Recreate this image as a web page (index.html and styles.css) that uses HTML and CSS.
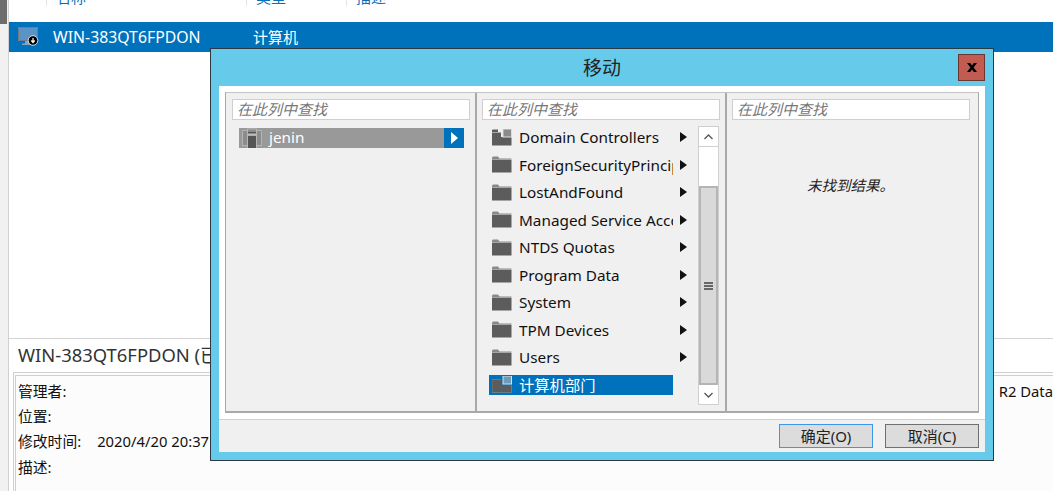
FILE: index.html
```html
<!DOCTYPE html>
<html lang="zh-CN">
<head>
    <meta charset="UTF-8">
    <title>移动</title>
    <link rel="stylesheet" href="styles.css">
</head>
<body>
    <svg class="defs" width="0" height="0">
        <symbol id="folder" viewBox="0 0 20 17">
            <path d="M0 3V1.500L1 .5H6L7.500 2.500H19.500V3Z" fill="#8a8a8a"/>
            <path d="M0 3.500H19.500V16.500H0Z" fill="#5c5c5c"/>
        </symbol>
        <symbol id="arrow" viewBox="0 0 7 10">
            <path d="M0 0L7 5L0 10Z" fill="#111"/>
        </symbol>
    </svg>

    <div class="gutter"><div class="gutter-thumb"></div></div>

    <div class="main">
        <div class="list-head">
            <div class="head-cell head-name"><span>名称</span></div>
            <div class="head-cell head-type"><span>类型</span></div>
            <div class="head-cell head-desc"><span>描述</span></div>
        </div>
        <div class="list-row">
            <svg class="pc-icon" width="21" height="20" viewBox="0 0 21 20">
                <rect x=".5" y=".5" width="19" height="13" fill="#5b93c4" stroke="#6d7d8c"/>
                <path d="M7 14H13V16.500H16V18H4V16.500H7Z" fill="#7fa6c6"/>
                <circle cx="15" cy="13.500" r="4.800" fill="#000" stroke="#fff" stroke-width=".8"/>
                <path d="M15 11V14.500M13.300 13.500L15 15.500L16.700 13.500" fill="none" stroke="#fff" stroke-width="1.200"/>
            </svg>
            <span class="row-name">WIN-383QT6FPDON</span>
            <span class="row-type">计算机</span>
        </div>
        <div class="list-empty"></div>
        <div class="detail-title">WIN-383QT6FPDON (已</div>
        <div class="detail-box">
            <div class="detail-line">
                <span>管理者:</span>
                <span class="detail-right">R2 Data</span>
            </div>
            <div class="detail-line">位置:</div>
            <div class="detail-line">修改时间:<span class="detail-date">2020/4/20 20:37</span></div>
            <div class="detail-line">描述:</div>
        </div>
    </div>

    <div class="dialog">
        <div class="dialog-title">
            <span>移动</span>
            <div class="close-btn">
                <svg width="10" height="9" viewBox="0 0 10 9"><path d="M0 0H3.200L5 2.500L6.800 0H10L6.600 4.500L10 9H6.800L5 6.500L3.200 9H0L3.400 4.500Z" fill="#000"/></svg>
            </div>
        </div>
        <div class="dialog-body">
            <div class="columns">
                <div class="column">
                    <div class="search">在此列中查找</div>
                    <div class="selected-item">
                        <svg class="item-icon" width="20" height="20" viewBox="0 0 20 20">
                            <path d="M.5 2.500H19.500V17.500H.5Z" fill="#8c8c8c" stroke="#b5b5b5"/>
                            <path d="M5 .5H15V20H5Z" fill="#b5b5b5"/>
                            <path d="M6 1.500H14V20H6Z" fill="#8c8c8c"/>
                            <path d="M6 4H14V5H6ZM6 7.500H14V20H6Z" fill="#555"/>
                            <path d="M6 6.500H14V7.500H6Z" fill="#eee"/>
                        </svg>
                        <span class="selected-name">jenin</span>
                        <span class="selected-arrow">
                            <svg width="7" height="12" viewBox="0 0 7 12"><path d="M0 0L7 6L0 12Z" fill="#fff"/></svg>
                        </span>
                    </div>
                </div>
                <div class="column">
                    <div class="search">在此列中查找</div>
                    <div class="tree">
                        <div class="tree-items">
                            <div class="tree-row">
                                <svg class="folder" width="20" height="17" viewBox="0 0 20 17">
                                    <path d="M0 3.500H19.500V16.500H0Z" fill="#5c5c5c"/>
                                    <path d="M0 3V1L1 .5H6V3Z" fill="#5c5c5c"/>
                                    <rect x="9" y="0" width="10.500" height="8" fill="#f0f0f0"/>
                                    <rect x="11" y="0" width="8.500" height="8" fill="#8a8a8a" stroke="#ddd"/>
                                </svg>
                                <span class="tree-label">Domain Controllers</span>
                                <svg class="tree-arrow" width="7" height="10"><use href="#arrow"/></svg>
                            </div>
                            <div class="tree-row">
                                <svg class="folder" width="20" height="17"><use href="#folder"/></svg>
                                <span class="tree-label">ForeignSecurityPrincipals</span>
                                <svg class="tree-arrow" width="7" height="10"><use href="#arrow"/></svg>
                            </div>
                            <div class="tree-row">
                                <svg class="folder" width="20" height="17"><use href="#folder"/></svg>
                                <span class="tree-label">LostAndFound</span>
                                <svg class="tree-arrow" width="7" height="10"><use href="#arrow"/></svg>
                            </div>
                            <div class="tree-row">
                                <svg class="folder" width="20" height="17"><use href="#folder"/></svg>
                                <span class="tree-label">Managed Service Accounts</span>
                                <svg class="tree-arrow" width="7" height="10"><use href="#arrow"/></svg>
                            </div>
                            <div class="tree-row">
                                <svg class="folder" width="20" height="17"><use href="#folder"/></svg>
                                <span class="tree-label">NTDS Quotas</span>
                                <svg class="tree-arrow" width="7" height="10"><use href="#arrow"/></svg>
                            </div>
                            <div class="tree-row">
                                <svg class="folder" width="20" height="17"><use href="#folder"/></svg>
                                <span class="tree-label">Program Data</span>
                                <svg class="tree-arrow" width="7" height="10"><use href="#arrow"/></svg>
                            </div>
                            <div class="tree-row">
                                <svg class="folder" width="20" height="17"><use href="#folder"/></svg>
                                <span class="tree-label">System</span>
                                <svg class="tree-arrow" width="7" height="10"><use href="#arrow"/></svg>
                            </div>
                            <div class="tree-row">
                                <svg class="folder" width="20" height="17"><use href="#folder"/></svg>
                                <span class="tree-label">TPM Devices</span>
                                <svg class="tree-arrow" width="7" height="10"><use href="#arrow"/></svg>
                            </div>
                            <div class="tree-row">
                                <svg class="folder" width="20" height="17"><use href="#folder"/></svg>
                                <span class="tree-label">Users</span>
                                <svg class="tree-arrow" width="7" height="10"><use href="#arrow"/></svg>
                            </div>
                            <div class="tree-row tree-row-active">
                                <svg class="folder" width="20" height="17" viewBox="0 0 20 17">
                                    <path d="M0 3.500H19.500V16.500H0Z" fill="#5c5c5c" stroke="#999" stroke-width=".5"/>
                                    <rect x="9" y="0" width="11" height="9" fill="#0072bc"/>
                                    <rect x="11" y="0" width="8.500" height="8" fill="#6f9ab8" stroke="#ddd"/>
                                </svg>
                                <span class="tree-label">计算机部门</span>
                            </div>
                        </div>
                        <div class="scrollbar">
                            <div class="scroll-btn">
                                <svg width="9" height="6" viewBox="0 0 9 6"><path d="M.5 5L4.500 1L8.500 5" fill="none" stroke="#555" stroke-width="1.300"/></svg>
                            </div>
                            <div class="scroll-track"></div>
                            <div class="scroll-thumb"><div class="thumb-grip"></div></div>
                            <div class="scroll-btn">
                                <svg width="9" height="6" viewBox="0 0 9 6"><path d="M.5 1L4.500 5L8.500 1" fill="none" stroke="#555" stroke-width="1.300"/></svg>
                            </div>
                        </div>
                    </div>
                </div>
                <div class="column">
                    <div class="search">在此列中查找</div>
                    <div class="no-result">未找到结果。</div>
                </div>
            </div>
            <div class="dialog-footer">
                <div class="btn btn-default">确定(O)</div>
                <div class="btn">取消(C)</div>
            </div>
        </div>
    </div>
</body>
</html>
```
FILE: styles.css
```css
html, body {
    margin: 0;
    height: 491px;
    overflow: hidden;
}
body {
    position: relative;
    display: flex;
    background: #fff;
    color: #111;
    font-family: "Noto Sans", "Noto Sans CJK SC", sans-serif;
    font-size: 15px;
}
.defs {
    position: absolute;
}
.gutter {
    width: 8px;
    background: #f1f1f1;
    border-right: 1px solid #d0d0d0;
    flex: none;
}
.gutter-thumb {
    width: 7px;
    height: 24px;
    background: #6d6d6d;
}
.main {
    flex: 1;
    display: flex;
    flex-direction: column;
    min-width: 0;
}
.list-head {
    display: flex;
    height: 22px;
    color: #0b6fb8;
    flex: none;
}
.head-cell {
    height: 6px;
    overflow: hidden;
    padding-left: 9px;
    border-left: 1px solid #e5e5e5;
}
.head-cell span {
    display: block;
    margin-top: -13px;
    line-height: 20px;
}
.head-name {
    width: 190px;
    margin-left: 37px;
}
.head-type {
    width: 90px;
}
.head-desc {
    width: 90px;
}
.list-row {
    display: flex;
    align-items: center;
    height: 30px;
    background: #0072bc;
    color: #fff;
    flex: none;
}
.pc-icon {
    margin-left: 9px;
    flex: none;
}
.row-name {
    margin-left: 14px;
    width: 200px;
    font-size: 15.8px;
    line-height: 20px;
}
.row-type {
    line-height: 18px;
}
.list-empty {
    flex: 1;
    border-bottom: 1px solid #d4d4d4;
}
.detail-title {
    height: 33px;
    line-height: 32px;
    padding-left: 9px;
    font-size: 18.4px;
    color: #333;
    white-space: nowrap;
    flex: none;
}
.detail-box {
    height: 119px;
    box-sizing: border-box;
    margin-left: 4px;
    border-top: 4px double #cfcfcf;
    border-left: 3px double #cfcfcf;
    background: #fcfcfc;
    padding: 3px 0 0 2px;
    flex: none;
    font-size: 14.8px;
}
.detail-line {
    display: flex;
    height: 25px;
    line-height: 24px;
}
.detail-line:last-child {
    line-height: 26px;
}
.detail-date {
    margin-left: 16px;
}
.detail-right {
    margin-left: auto;
    white-space: nowrap;
}
.dialog {
    position: absolute;
    left: 210px;
    top: 48px;
    width: 766px;
    height: 403px;
    border: 1px solid #2b3a42;
    background: #66cbea;
    display: flex;
    flex-direction: column;
    padding: 0 8px 8px;
}
.dialog-title {
    height: 37px;
    line-height: 39px;
    text-align: center;
    font-size: 19px;
    color: #222;
    position: relative;
    flex: none;
}
.close-btn {
    position: absolute;
    right: 0;
    top: 5px;
    width: 25px;
    height: 25px;
    background: #c25b52;
    border: 1px solid #6b3530;
    display: flex;
    align-items: center;
    justify-content: center;
}
.dialog-body {
    flex: 1;
    background: #fff;
    display: flex;
    flex-direction: column;
    padding-top: 6px;
}
.columns {
    display: flex;
    height: 321px;
    margin: 0 6px;
    border: 1px solid #a9a9a9;
    border-top-color: #c4c4c4;
    border-bottom-width: 2px;
    box-sizing: border-box;
    background: #f0f0f0;
    flex: none;
}
.column {
    width: 250px;
    box-sizing: border-box;
    padding: 6px 5px 0;
    border-right: 2px solid #a8a8a8;
    flex: none;
}
.column:first-child {
    width: 251px;
    padding-left: 6px;
}
.column:last-child {
    flex: 1;
    border-right: none;
}
.search {
    height: 21px;
    width: 238px;
    line-height: 18px;
    box-sizing: border-box;
    border: 1px solid #cfcfcf;
    background: #fff;
    color: #777;
    font-style: italic;
    font-size: 15px;
    padding-left: 4px;
}
.selected-item {
    display: flex;
    align-items: center;
    height: 20px;
    margin: 8px 6px 0 7px;
    background: #999;
    color: #fff;
}
.item-icon {
    margin-left: 3px;
    flex: none;
}
.selected-name {
    margin-left: 7px;
    padding-bottom: 2px;
    flex: 1;
    font-size: 15.3px;
    line-height: 17px;
}
.selected-arrow {
    width: 20px;
    height: 20px;
    background: #0072bc;
    display: flex;
    align-items: center;
    justify-content: center;
}
.tree {
    display: flex;
    margin-top: 6px;
}
.tree-items {
    width: 209px;
    margin-left: 7px;
    padding-top: 1px;
    flex: none;
}
.tree-row {
    display: flex;
    align-items: center;
    height: 20px;
    margin-bottom: 7.5px;
    font-size: 15.3px;
}
.tree-row-active {
    background: #0072bc;
    color: #fff;
    width: 184px;
}
.folder {
    margin-left: 3px;
    flex: none;
}
.tree-label {
    margin-left: 7px;
    width: 154px;
    line-height: 20px;
    overflow: hidden;
    white-space: nowrap;
    flex: none;
}
.tree-arrow {
    margin-left: 7px;
    flex: none;
}
.scrollbar {
    width: 21px;
    height: 279px;
    display: flex;
    flex-direction: column;
    background: #fff;
    flex: none;
    box-sizing: border-box;
    border: 1px solid #cfcfcf;
}
.scroll-btn {
    height: 19px;
    display: flex;
    align-items: center;
    justify-content: center;
    background: #fff;
    flex: none;
}
.scroll-track {
    height: 40px;
    border-top: 1px solid #cfcfcf;
    box-sizing: border-box;
    flex: none;
}
.scroll-thumb {
    flex: 1;
    background: #d9d9d9;
    border: 2px solid #b5b5b5;
    display: flex;
    align-items: center;
    justify-content: center;
}
.thumb-grip {
    width: 9px;
    height: 8px;
    background: linear-gradient(#666 2px, #d9d9d9 2px, #d9d9d9 3px, #666 3px, #666 5px, #d9d9d9 5px, #d9d9d9 6px, #666 6px);
}
.no-result {
    margin-top: 54px;
    text-align: center;
    font-style: italic;
    font-size: 14.5px;
    color: #222;
    padding-right: 4px;
}
.dialog-footer {
    margin-top: 6px;
    flex: 1;
    background: #f0f0f0;
    border-top: 1px solid #d0d0d0;
    display: flex;
    justify-content: flex-end;
    align-items: flex-start;
    gap: 12px;
    padding: 4px 6px 0 0;
}
.btn {
    width: 94px;
    height: 24px;
    box-sizing: border-box;
    border: 1px solid #707070;
    background: #dcdcdc;
    text-align: center;
    line-height: 22px;
    font-size: 15px;
    color: #222;
}
.btn-default {
    border-color: #3c97e8;
}
```
